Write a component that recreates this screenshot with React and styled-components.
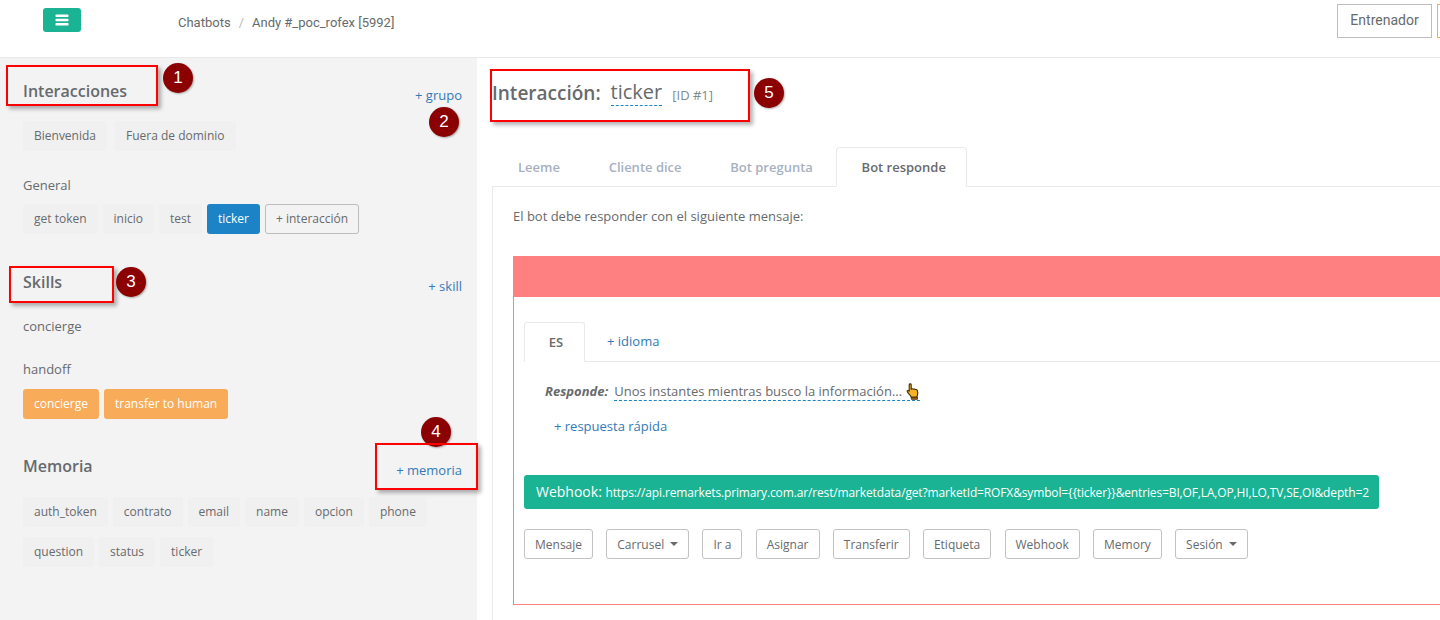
import React from "react";
import styled, { createGlobalStyle } from "styled-components";

const GlobalStyle = createGlobalStyle`
  html, body {
    margin: 0;
    padding: 0;
    background: #ffffff;
  }
  body {
    font-family: "Open Sans", "Liberation Sans", sans-serif;
    font-size: 13px;
    color: #676a6c;
  }
  * {
    box-sizing: border-box;
  }
`;

const Page = styled.div`
  position: relative;
  width: 1440px;
  height: 620px;
  overflow: hidden;
  background: #ffffff;
`;

const TopBar = styled.header`
  height: 58px;
  border-bottom: 1px solid #e7eaec;
  display: flex;
  align-items: flex-start;
  padding-left: 43px;
  font-family: Roboto, "Liberation Sans", sans-serif;
`;

const MenuButton = styled.button`
  width: 38px;
  height: 24px;
  margin-top: 8px;
  padding: 0;
  border: 0;
  border-radius: 3px;
  background: #1ab394;
  display: flex;
  align-items: center;
  justify-content: center;
`;

const Breadcrumb = styled.div`
  margin-left: 97px;
  margin-top: 14px;
  font-size: 13px;
  line-height: 17px;
  color: #676a6c;
`;

const Slash = styled.span`
  color: #b5b8ba;
  margin: 0 8px;
`;

const TopActions = styled.div`
  margin-left: auto;
  margin-top: 4px;
  margin-right: -25px;
  display: flex;
  gap: 5px;
`;

const TopButton = styled.button`
  height: 34px;
  width: ${(p) => p.$width}px;
  background: #ffffff;
  border: 1px solid ${(p) => p.$border};
  font-family: Roboto, "Liberation Sans", sans-serif;
  font-size: 14px;
  color: #676a6c;
  padding: 0 0 2px;
`;

const Body = styled.div`
  display: flex;
  height: 562px;
`;

const Sidebar = styled.aside`
  width: 477px;
  flex-shrink: 0;
  background: #f3f3f4;
  padding: 24px 15px 0 23px;
`;

const SectionHead = styled.div`
  display: flex;
  justify-content: space-between;
  align-items: flex-end;
  margin-top: ${(p) => p.$top || 0}px;
`;

const SectionTitle = styled.h3`
  margin: 0 0 4px;
  font-size: 16px;
  line-height: 18px;
  font-weight: 600;
  color: #676a6c;
`;

const AddLink = styled.a`
  font-size: 13px;
  line-height: 18px;
  color: #337ab7;
  text-decoration: none;
`;

const TagRow = styled.div`
  display: flex;
  flex-wrap: wrap;
  gap: 10px ${(p) => p.$gap || 5}px;
  margin-top: ${(p) => p.$top}px;
`;

const Tag = styled.span`
  height: 30px;
  padding: 0 11px;
  border-radius: 3px;
  font-size: 12px;
  line-height: 30px;
  background: #f0f0f1;
  color: #676a6c;
`;

const ActiveTag = styled(Tag)`
  background: #1c84c6;
  color: #ffffff;
`;

const SkillTag = styled(Tag)`
  background: #f8ac59;
  color: #ffffff;
`;

const AddTag = styled(Tag)`
  padding: 0 10px;
  border: 1px solid #bcbcbc;
  line-height: 28px;
  background: #f3f3f4;
`;

const GroupLabel = styled.div`
  font-size: 13px;
  line-height: 18px;
  margin-top: ${(p) => p.$top}px;
`;

const Main = styled.main`
  flex: 1;
  padding: 21px 0 0 15px;
  min-width: 0;
`;

const TitleRow = styled.div`
  display: flex;
  align-items: flex-start;
  height: 47px;
`;

const MainTitle = styled.h2`
  margin: 1px 0 0;
  font-size: 19px;
  font-weight: 600;
  color: #676a6c;
`;

const EditableName = styled.span`
  margin-left: 10px;
  font-size: 20px;
  line-height: 26px;
  color: #676a6c;
  border-bottom: 1px dashed #1c84c6;
`;

const IdNote = styled.span`
  margin: 7px 0 0 10px;
  font-size: 13px;
  color: #7d8a8c;
`;

const Tabs = styled.div`
  display: flex;
  gap: 1.7px;
  height: 40px;
  margin-top: 21px;
  border-bottom: 1px solid #e7eaec;
  width: 1000px;
`;

const Tab = styled.div`
  height: 40px;
  padding: 0 20px 0 25px;
  border: 1px solid ${(p) => (p.$active ? "#e7eaec" : "transparent")};
  border-bottom-color: ${(p) => (p.$active ? "#ffffff" : "transparent")};
  border-radius: 4px 4px 0 0;
  font-size: 13px;
  font-weight: 600;
  line-height: 38px;
  color: ${(p) => (p.$active ? "#676a6c" : "#a7b1c2")};
  background: ${(p) => (p.$active ? "#ffffff" : "transparent")};
`;

const TabPanel = styled.div`
  width: 1000px;
  height: 440px;
  border-left: 1px solid #e7eaec;
  padding: 20px 0 0 20px;
`;

const Intro = styled.p`
  margin: 0;
  font-size: 13px;
  line-height: 18px;
`;

const MessageCard = styled.section`
  margin-top: 31px;
  width: 980px;
  height: 349px;
  border: 1px solid #ff8080;
`;

const CardHeader = styled.div`
  height: 41px;
  margin: -1px -1px 0;
  background: #ff8080;
`;

const CardBody = styled.div`
  padding: 25px 0 0 10px;
`;

const LangTabs = styled.div`
  display: flex;
  align-items: flex-start;
  height: 40px;
  border-bottom: 1px solid #e7eaec;
`;

const LangTab = styled.div`
  width: 61px;
  height: 40px;
  padding-left: 3px;
  border: 1px solid #e7eaec;
  border-bottom-color: #ffffff;
  border-radius: 3px 3px 0 0;
  text-align: center;
  font-size: 13px;
  font-weight: 600;
  line-height: 39px;
  color: #676a6c;
`;

const LangAdd = styled(AddLink)`
  margin-left: 22px;
  line-height: 38px;
`;

const ResponseLine = styled.div`
  display: flex;
  align-items: flex-start;
  margin: 20px 0 0 21px;
  line-height: 18px;
`;

const ResponseLabel = styled.strong`
  font-style: italic;
  font-weight: 700;
  margin-right: 6px;
`;

const ResponseText = styled.span`
  display: inline-flex;
  align-items: flex-end;
  height: 19px;
  border-bottom: 1px dashed #1c84c6;
`;

const QuickReply = styled(AddLink)`
  display: block;
  margin: 16px 0 0 30px;
`;

const WebhookBar = styled.div`
  width: 855px;
  height: 34px;
  margin-top: 40px;
  padding-left: 12px;
  border-radius: 3px;
  background: #1ab394;
  color: #ffffff;
  font-size: 14px;
  line-height: 33px;
  white-space: nowrap;
`;

const WebhookUrl = styled.span`
  font-size: 12px;
  letter-spacing: -0.14px;
`;

const ActionRow = styled.div`
  display: flex;
  gap: 13.25px;
  margin-top: 20px;
`;

const ActionButton = styled.button`
  height: 30px;
  padding: 0 10px;
  background: #ffffff;
  border: 1px solid #c2c2c2;
  border-radius: 3px;
  font-family: inherit;
  font-size: 12px;
  color: #676a6c;
  display: flex;
  align-items: center;
`;

const Caret = styled.i`
  margin-left: 6px;
  border-top: 4px solid #676a6c;
  border-left: 4px solid transparent;
  border-right: 4px solid transparent;
`;

const Highlight = styled.div`
  position: absolute;
  left: ${(p) => p.$x}px;
  top: ${(p) => p.$y}px;
  width: ${(p) => p.$w}px;
  height: ${(p) => p.$h}px;
  border: 2px solid #ff0000;
  box-shadow: 3px 3px 4px rgba(0, 0, 0, 0.3);
`;

const Badge = styled.div`
  position: absolute;
  left: ${(p) => p.$x - 15}px;
  top: ${(p) => p.$y - 15}px;
  width: 30px;
  height: 30px;
  border-radius: 50%;
  background: #8b0000;
  box-shadow: 1px 1px 2px rgba(0, 0, 0, 0.3);
  color: #ffffff;
  font-family: "Liberation Sans", Arial, sans-serif;
  font-size: 17px;
  line-height: 30px;
  text-align: center;
`;

const MenuIcon = () => (
  <svg width="14" height="12" viewBox="0 0 14 12">
    <rect x="0.5" y="0.5" width="13" height="2.4" rx="0.6" fill="#ffffff" />
    <rect x="0.5" y="4.8" width="13" height="2.4" rx="0.6" fill="#ffffff" />
    <rect x="0.5" y="9.1" width="13" height="2.4" rx="0.6" fill="#ffffff" />
  </svg>
);

const PointingHand = () => (
  <svg width="14" height="17" viewBox="0 0 14 17" style={{ marginLeft: 4 }}>
    <path
      d="M3.2 1.8c0-1.2 2-1.2 2 0v4.4l.6-.3c.7-.3 1.3-.1 1.6.3.7-.4 1.500-.2 1.800.4.8-.4 1.800 0 2.100.8.5 1.300.5 3.200.2 4.600-.2.900-.6 1.500-.7 2.400H5.300c-.4-1.400-1.500-2.500-2.700-3.800C1.700 9.600.8 8.500 1.200 7.800c.4-.6 1.300-.4 2 .4V1.800z"
      fill="#f5b32a"
      stroke="#3a2a08"
      strokeWidth="1.100"
      strokeLinejoin="round"
    />
    <path d="M5.300 14.200h6.100v2.100H5.300z" fill="#a8650c" stroke="#3a2a08" strokeWidth="0.800" />
  </svg>
);

const welcomeTags = ["Bienvenida", "Fuera de dominio"];
const generalTags = ["get token", "inicio", "test"];
const memoryTags = ["auth_token", "contrato", "email", "name", "opcion", "phone", "question", "status", "ticker"];
const tabs = ["Leeme", "Cliente dice", "Bot pregunta", "Bot responde"];
const actions = [
  { label: "Mensaje" },
  { label: "Carrusel", menu: true },
  { label: "Ir a" },
  { label: "Asignar" },
  { label: "Transferir" },
  { label: "Etiqueta" },
  { label: "Webhook" },
  { label: "Memory" },
  { label: "Sesión", menu: true },
];
const webhookUrl =
  "https://api.remarkets.primary.com.ar/rest/marketdata/get?marketId=ROFX&symbol={{ticker}}&entries=BI,OF,LA,OP,HI,LO,TV,SE,OI&depth=2";

const App = () => (
  <Page>
    <GlobalStyle />
    <TopBar>
      <MenuButton>
        <MenuIcon />
      </MenuButton>
      <Breadcrumb>
        Chatbots<Slash>/</Slash>Andy #_poc_rofex [5992]
      </Breadcrumb>
      <TopActions>
        <TopButton $width={95} $border="#bdbdbd">Entrenador</TopButton>
        <TopButton $width={28} $border="#f8ac59" />
      </TopActions>
    </TopBar>
    <Body>
      <Sidebar>
        <SectionHead>
          <SectionTitle>Interacciones</SectionTitle>
          <AddLink>+ grupo</AddLink>
        </SectionHead>
        <TagRow $top={17} $gap={8}>
          {welcomeTags.map((t) => (
            <Tag key={t}>{t}</Tag>
          ))}
        </TagRow>
        <GroupLabel $top={25}>General</GroupLabel>
        <TagRow $top={10}>
          {generalTags.map((t) => (
            <Tag key={t}>{t}</Tag>
          ))}
          <ActiveTag>ticker</ActiveTag>
          <AddTag>+ interacción</AddTag>
        </TagRow>
        <SectionHead $top={39}>
          <SectionTitle>Skills</SectionTitle>
          <AddLink>+ skill</AddLink>
        </SectionHead>
        <GroupLabel $top={22}>concierge</GroupLabel>
        <GroupLabel $top={25}>handoff</GroupLabel>
        <TagRow $top={11}>
          <SkillTag>concierge</SkillTag>
          <SkillTag>transfer to human</SkillTag>
        </TagRow>
        <SectionHead $top={38}>
          <SectionTitle>Memoria</SectionTitle>
          <AddLink>+ memoria</AddLink>
        </SectionHead>
        <TagRow $top={18}>
          {memoryTags.map((t) => (
            <Tag key={t}>{t}</Tag>
          ))}
        </TagRow>
      </Sidebar>
      <Main>
        <TitleRow>
          <MainTitle>Interacción:</MainTitle>
          <EditableName>ticker</EditableName>
          <IdNote>[ID #1]</IdNote>
        </TitleRow>
        <Tabs>
          {tabs.map((t) => (
            <Tab key={t} $active={t === "Bot responde"}>{t}</Tab>
          ))}
        </Tabs>
        <TabPanel>
          <Intro>El bot debe responder con el siguiente mensaje:</Intro>
          <MessageCard>
            <CardHeader />
            <CardBody>
              <LangTabs>
                <LangTab>ES</LangTab>
                <LangAdd>+ idioma</LangAdd>
              </LangTabs>
              <ResponseLine>
                <ResponseLabel>Responde:</ResponseLabel>
                <ResponseText>
                  Unos instantes mientras busco la información...
                  <PointingHand />
                </ResponseText>
              </ResponseLine>
              <QuickReply>+ respuesta rápida</QuickReply>
              <WebhookBar>
                Webhook: <WebhookUrl>{webhookUrl}</WebhookUrl>
              </WebhookBar>
              <ActionRow>
                {actions.map((a) => (
                  <ActionButton key={a.label}>
                    {a.label}
                    {a.menu && <Caret />}
                  </ActionButton>
                ))}
              </ActionRow>
            </CardBody>
          </MessageCard>
        </TabPanel>
      </Main>
    </Body>

    <Highlight $x={6} $y={65} $w={152} $h={41} />
    <Badge $x={178} $y={78}>1</Badge>
    <Badge $x={444} $y={122}>2</Badge>
    <Highlight $x={9} $y={266} $w={105} $h={37} />
    <Badge $x={131} $y={282}>3</Badge>
    <Badge $x={436} $y={432}>4</Badge>
    <Highlight $x={375} $y={443} $w={103} $h={47} />
    <Highlight $x={490} $y={69} $w={260} $h={53} />
    <Badge $x={769} $y={93}>5</Badge>
  </Page>
);

export default App;
